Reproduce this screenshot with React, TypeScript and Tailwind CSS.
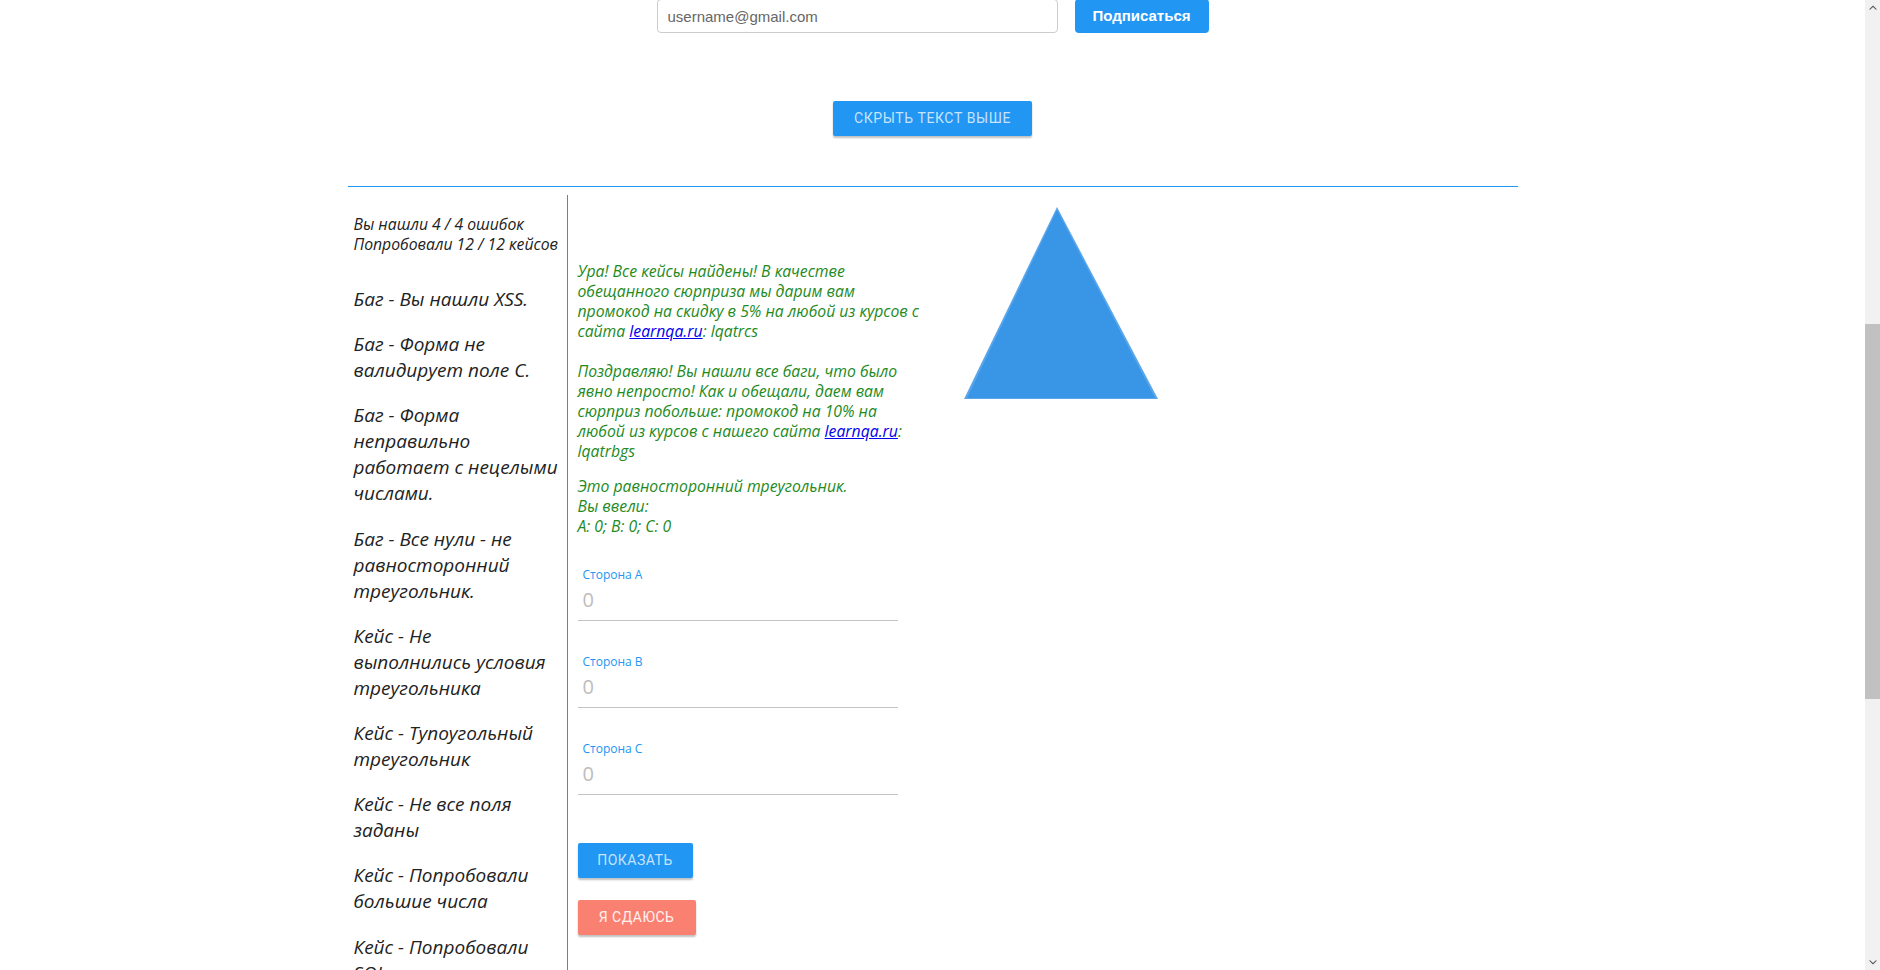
import type { FC } from "react";

// each entry is one item, split the way it wraps in the narrow column
const bugs = [
  ["Баг - Вы нашли XSS."],
  ["Баг - Форма не", "валидирует поле С."],
  ["Баг - Форма", "неправильно", "работает с нецелыми", "числами."],
  ["Баг - Все нули - не", "равносторонний", "треугольник."],
  ["Кейс - Не", "выполнились условия", "треугольника"],
  ["Кейс - Тупоугольный", "треугольник"],
  ["Кейс - Не все поля", "заданы"],
  ["Кейс - Попробовали", "большие числа"],
  ["Кейс - Попробовали", "SQL-инъекцию"],
  ["Кейс - Попробовали", "отрицательные числа"],
];

const Field: FC<{ label: string; first?: boolean }> = ({ label, first }) => (
  <div className={first ? "mt-[31px] w-[320px]" : "mt-[33px] w-[320px]"}>
    <div className="h-[16px] pl-[5px] text-[12px] leading-[16px] text-[#2196f3]">{label}</div>
    <input
      readOnly
      placeholder="0"
      className="block h-[38px] w-full border-b border-[#c4c4c4] pb-[4px] pl-[5px] text-[20px] outline-none placeholder:text-[#bdbdbd]"
    />
  </div>
);

const Scrollbar: FC = () => (
  <div className="flex h-full w-[15px] shrink-0 flex-col bg-[#f1f1f1]">
    <div className="flex h-[15px] items-center justify-center">
      <svg width="8" height="5" viewBox="0 0 8 5">
        <path d="M0 4.5 L4 0.5 L8 4.5 L6.6 4.5 L4 1.9 L1.4 4.5Z" fill="#505050" />
      </svg>
    </div>
    <div className="mt-[309px] h-[375px] bg-[#c1c1c1]" />
    <div className="flex-1" />
    <div className="flex h-[15px] items-center justify-center">
      <svg width="8" height="5" viewBox="0 0 8 5">
        <path d="M0 0.5 L4 4.5 L8 0.5 L6.6 0.5 L4 3.1 L1.4 0.5Z" fill="#505050" />
      </svg>
    </div>
  </div>
);

const Triangle: FC = () => (
  <svg width="195" height="194" viewBox="0 0 195 194">
    <defs>
      <filter id="soft" x="-5%" y="-5%" width="110%" height="110%">
        <feGaussianBlur stdDeviation="0.6" />
      </filter>
    </defs>
    <polygon points="93,0 0,192 194,192" fill="#5aa6ea" filter="url(#soft)" />
    <polygon points="93,3 3,191 191,191" fill="#3996e7" />
  </svg>
);

export default function App() {
  return (
    <div className="flex h-[970px] overflow-hidden bg-white font-['Open_Sans',sans-serif]">
      <main className="flex-1 overflow-hidden">
        <div className="-mt-px flex justify-center gap-[17px] font-['Liberation_Sans',Arial,sans-serif]">
          <input
            readOnly
            placeholder="username@gmail.com"
            className="h-[34px] w-[401px] rounded-[4px] border border-[#cccccc] px-[10px] text-[15px] outline-none placeholder:text-[#666666]"
          />
          <button className="h-[34px] w-[134px] rounded-[4px] bg-[#2196f3] text-[15px] font-bold text-white">
            Подписаться
          </button>
        </div>

        <div className="mt-[68px] flex justify-center">
          <button className="h-[35px] w-[199px] rounded-[2px] bg-[#2196f3] font-['Roboto',sans-serif] text-[14px] tracking-[0.6px] text-white/75 shadow-[0_2px_2px_rgba(0,0,0,0.25)]">
            СКРЫТЬ ТЕКСТ ВЫШЕ
          </button>
        </div>

        <div className="mx-auto mt-[50px] w-[1170px] border-t border-[#2196f3]">
          <div className="mt-[8px] flex">
            <div className="w-[219px] shrink-0 pr-[2px] pl-[6px] pt-[19px] italic text-[#222]">
              <div className="text-[15.75px] leading-[20px]">
                Вы нашли 4 / 4 ошибок
                <br />
                Попробовали 12 / 12 кейсов
              </div>
              <div className="mt-[32px]">
                {bugs.map((lines) => (
                  <p key={lines.join(" ")} className="mb-[19.2px] whitespace-nowrap text-[19px] leading-[26px]">
                    {lines.map((l, i) => (
                      <span key={l}>
                        {i > 0 && <br />}
                        {l}
                      </span>
                    ))}
                  </p>
                ))}
              </div>
            </div>

            <div className="min-h-[900px] w-[397px] shrink-0 border-l border-[#2196f3] pl-[10px] pt-[66px]">
              <div className="w-[348px] text-[15.75px] leading-[20px] italic text-[#238a1e]">
                <p>
                  Ура! Все кейсы найдены! В качестве обещанного сюрприза мы дарим вам промокод на скидку в 5% на любой из курсов с сайта{" "}
                  <a href="#" className="text-[#0000ee] underline">
                    learnqa.ru
                  </a>
                  : lqatrcs
                  <br />
                  <br />
                  Поздравляю! Вы нашли все баги, что было явно непросто! Как и обещали, даем вам сюрприз побольше: промокод на 10% на любой из курсов с нашего сайта{" "}
                  <a href="#" className="text-[#0000ee] underline">
                    learnqa.ru
                  </a>
                  : lqatrbgs
                </p>
                <p className="mt-[15px]">
                  Это равносторонний треугольник.
                  <br />
                  Вы ввели:
                  <br />
                  A: 0; B: 0; C: 0
                </p>
              </div>

              <Field label="Сторона A" first />
              <Field label="Сторона B" />
              <Field label="Сторона C" />

              <div className="mt-[48px] flex flex-col items-start gap-[22px] font-['Roboto',sans-serif] text-[14px] tracking-[0.5px]">
                <button className="h-[35px] w-[115px] rounded-[2px] bg-[#2196f3] text-white/75 shadow-[0_2px_2px_rgba(0,0,0,0.25)]">
                  ПОКАЗАТЬ
                </button>
                <button className="h-[35px] w-[118px] rounded-[2px] bg-[#fa8072] text-white/90 shadow-[0_2px_2px_rgba(0,0,0,0.25)]">
                  Я СДАЮСЬ
                </button>
              </div>
            </div>

            <div className="pt-[12px]">
              <Triangle />
            </div>
          </div>
        </div>
      </main>
      <Scrollbar />
    </div>
  );
}
